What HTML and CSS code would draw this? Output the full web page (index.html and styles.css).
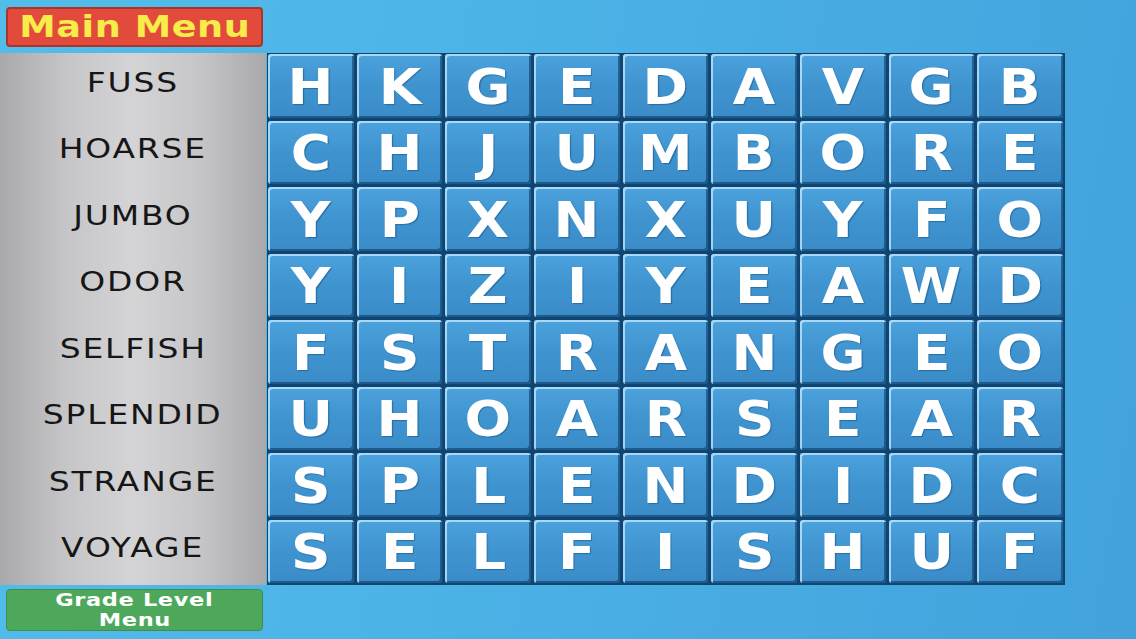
FILE: index.html
```html
<!DOCTYPE html>
<html>
<head>
<meta charset="utf-8">
<link rel="stylesheet" href="styles.css">
</head>
<body>
<div class="app">
  <div class="top-left">
    <div class="btn btn-main"><span class="wide">Main Menu</span></div>
  </div>
  <div class="words">
    <div class="word"><span class="wide">FUSS</span></div>
    <div class="word"><span class="wide">HOARSE</span></div>
    <div class="word"><span class="wide">JUMBO</span></div>
    <div class="word"><span class="wide">ODOR</span></div>
    <div class="word"><span class="wide">SELFISH</span></div>
    <div class="word"><span class="wide">SPLENDID</span></div>
    <div class="word"><span class="wide">STRANGE</span></div>
    <div class="word"><span class="wide">VOYAGE</span></div>
  </div>
  <div class="board">
    <div class="tile"><span>H</span></div><div class="tile"><span>K</span></div><div class="tile"><span>G</span></div><div class="tile"><span>E</span></div><div class="tile"><span>D</span></div><div class="tile"><span>A</span></div><div class="tile"><span>V</span></div><div class="tile"><span>G</span></div><div class="tile"><span>B</span></div>
    <div class="tile"><span>C</span></div><div class="tile"><span>H</span></div><div class="tile"><span>J</span></div><div class="tile"><span>U</span></div><div class="tile"><span>M</span></div><div class="tile"><span>B</span></div><div class="tile"><span>O</span></div><div class="tile"><span>R</span></div><div class="tile"><span>E</span></div>
    <div class="tile"><span>Y</span></div><div class="tile"><span>P</span></div><div class="tile"><span>X</span></div><div class="tile"><span>N</span></div><div class="tile"><span>X</span></div><div class="tile"><span>U</span></div><div class="tile"><span>Y</span></div><div class="tile"><span>F</span></div><div class="tile"><span>O</span></div>
    <div class="tile"><span>Y</span></div><div class="tile"><span>I</span></div><div class="tile"><span>Z</span></div><div class="tile"><span>I</span></div><div class="tile"><span>Y</span></div><div class="tile"><span>E</span></div><div class="tile"><span>A</span></div><div class="tile"><span>W</span></div><div class="tile"><span>D</span></div>
    <div class="tile"><span>F</span></div><div class="tile"><span>S</span></div><div class="tile"><span>T</span></div><div class="tile"><span>R</span></div><div class="tile"><span>A</span></div><div class="tile"><span>N</span></div><div class="tile"><span>G</span></div><div class="tile"><span>E</span></div><div class="tile"><span>O</span></div>
    <div class="tile"><span>U</span></div><div class="tile"><span>H</span></div><div class="tile"><span>O</span></div><div class="tile"><span>A</span></div><div class="tile"><span>R</span></div><div class="tile"><span>S</span></div><div class="tile"><span>E</span></div><div class="tile"><span>A</span></div><div class="tile"><span>R</span></div>
    <div class="tile"><span>S</span></div><div class="tile"><span>P</span></div><div class="tile"><span>L</span></div><div class="tile"><span>E</span></div><div class="tile"><span>N</span></div><div class="tile"><span>D</span></div><div class="tile"><span>I</span></div><div class="tile"><span>D</span></div><div class="tile"><span>C</span></div>
    <div class="tile"><span>S</span></div><div class="tile"><span>E</span></div><div class="tile"><span>L</span></div><div class="tile"><span>F</span></div><div class="tile"><span>I</span></div><div class="tile"><span>S</span></div><div class="tile"><span>H</span></div><div class="tile"><span>U</span></div><div class="tile"><span>F</span></div>
  </div>
  <div class="bottom-left">
    <div class="btn btn-grade">
      <span class="wide">Grade Level</span>
      <span class="wide">Menu</span>
    </div>
  </div>
</div>
</body>
</html>
```
FILE: styles.css
```css
html, body {
  margin: 0;
  padding: 0;
}
body {
  width: 1136px;
  height: 639px;
  overflow: hidden;
  background: linear-gradient(100deg, #52bdea 0%, #4bb2e6 45%, #43a2dc 100%);
  font-family: "DejaVu Sans", sans-serif;
}
.app {
  display: grid;
  grid-template-columns: 267px 798px;
  grid-template-rows: 53px 532px 54px;
}
.wide {
  display: inline-block;
}
.top-left {
  grid-column: 1;
  grid-row: 1;
  padding: 7px 3px 6px 6px;
  box-sizing: border-box;
}
.btn {
  box-sizing: border-box;
  width: 257px;
  border-radius: 4px;
  text-align: center;
  font-family: "DejaVu Sans", sans-serif;
  font-weight: 700;
}
.btn-main {
  height: 40px;
  background: #e24a3c;
  border: 2px solid #a8342c;
  color: #f6ec4a;
  font-size: 30px;
  line-height: 35px;
}
.btn-main .wide {
  transform: scaleX(1.22);
  letter-spacing: 0.5px;
}
.words {
  grid-column: 1;
  grid-row: 2;
  width: 266px;
  background: linear-gradient(90deg, #a9a9ab 0%, #c6c6c8 25%, #d4d4d6 50%, #c6c6c8 75%, #a9a9ab 100%);
  display: grid;
  grid-template-rows: repeat(8, minmax(0, 1fr));
}
.word {
  display: flex;
  align-items: center;
  justify-content: center;
  font-size: 27px;
  line-height: 1;
  color: #161616;
  padding-bottom: 8px;
}
.word .wide {
  transform: scaleX(1.22);
  letter-spacing: 1.5px;
}
.board {
  grid-column: 2;
  grid-row: 2;
  display: grid;
  grid-template-columns: repeat(9, minmax(0, 1fr));
  grid-template-rows: repeat(8, minmax(0, 1fr));
  background: #0f4573;
  padding: 1px 2px 2px 1px;
  box-sizing: border-box;
  gap: 3px;
}
.tile {
  display: flex;
  align-items: center;
  justify-content: center;
  border-radius: 3px;
  background: linear-gradient(180deg, #4ca2dc 0%, #3f94d0 50%, #3a8cc8 100%);
  box-shadow: inset 2px 2px 0 rgba(200, 235, 255, 0.75), inset -2px -2px 0 rgba(10, 50, 90, 0.55);
  color: #ffffff;
  font-size: 49px;
  font-weight: 700;
  line-height: 1;
  padding-top: 3px;
  text-shadow: 1px 1px 1px rgba(0, 40, 80, 0.35);
}
.tile span {
  display: inline-block;
  transform: scaleX(1.12);
}
.bottom-left {
  grid-column: 1;
  grid-row: 3;
  padding: 4px 3px 0 6px;
}
.btn-grade {
  height: 42px;
  background: #4ea85c;
  border: 1px solid #3f8f4c;
  color: #ffffff;
  font-size: 18px;
  line-height: 20px;
  display: flex;
  flex-direction: column;
  align-items: center;
  justify-content: center;
}
.btn-grade .wide {
  transform: scaleX(1.25);
  letter-spacing: 0.5px;
  line-height: 20px;
}
```
